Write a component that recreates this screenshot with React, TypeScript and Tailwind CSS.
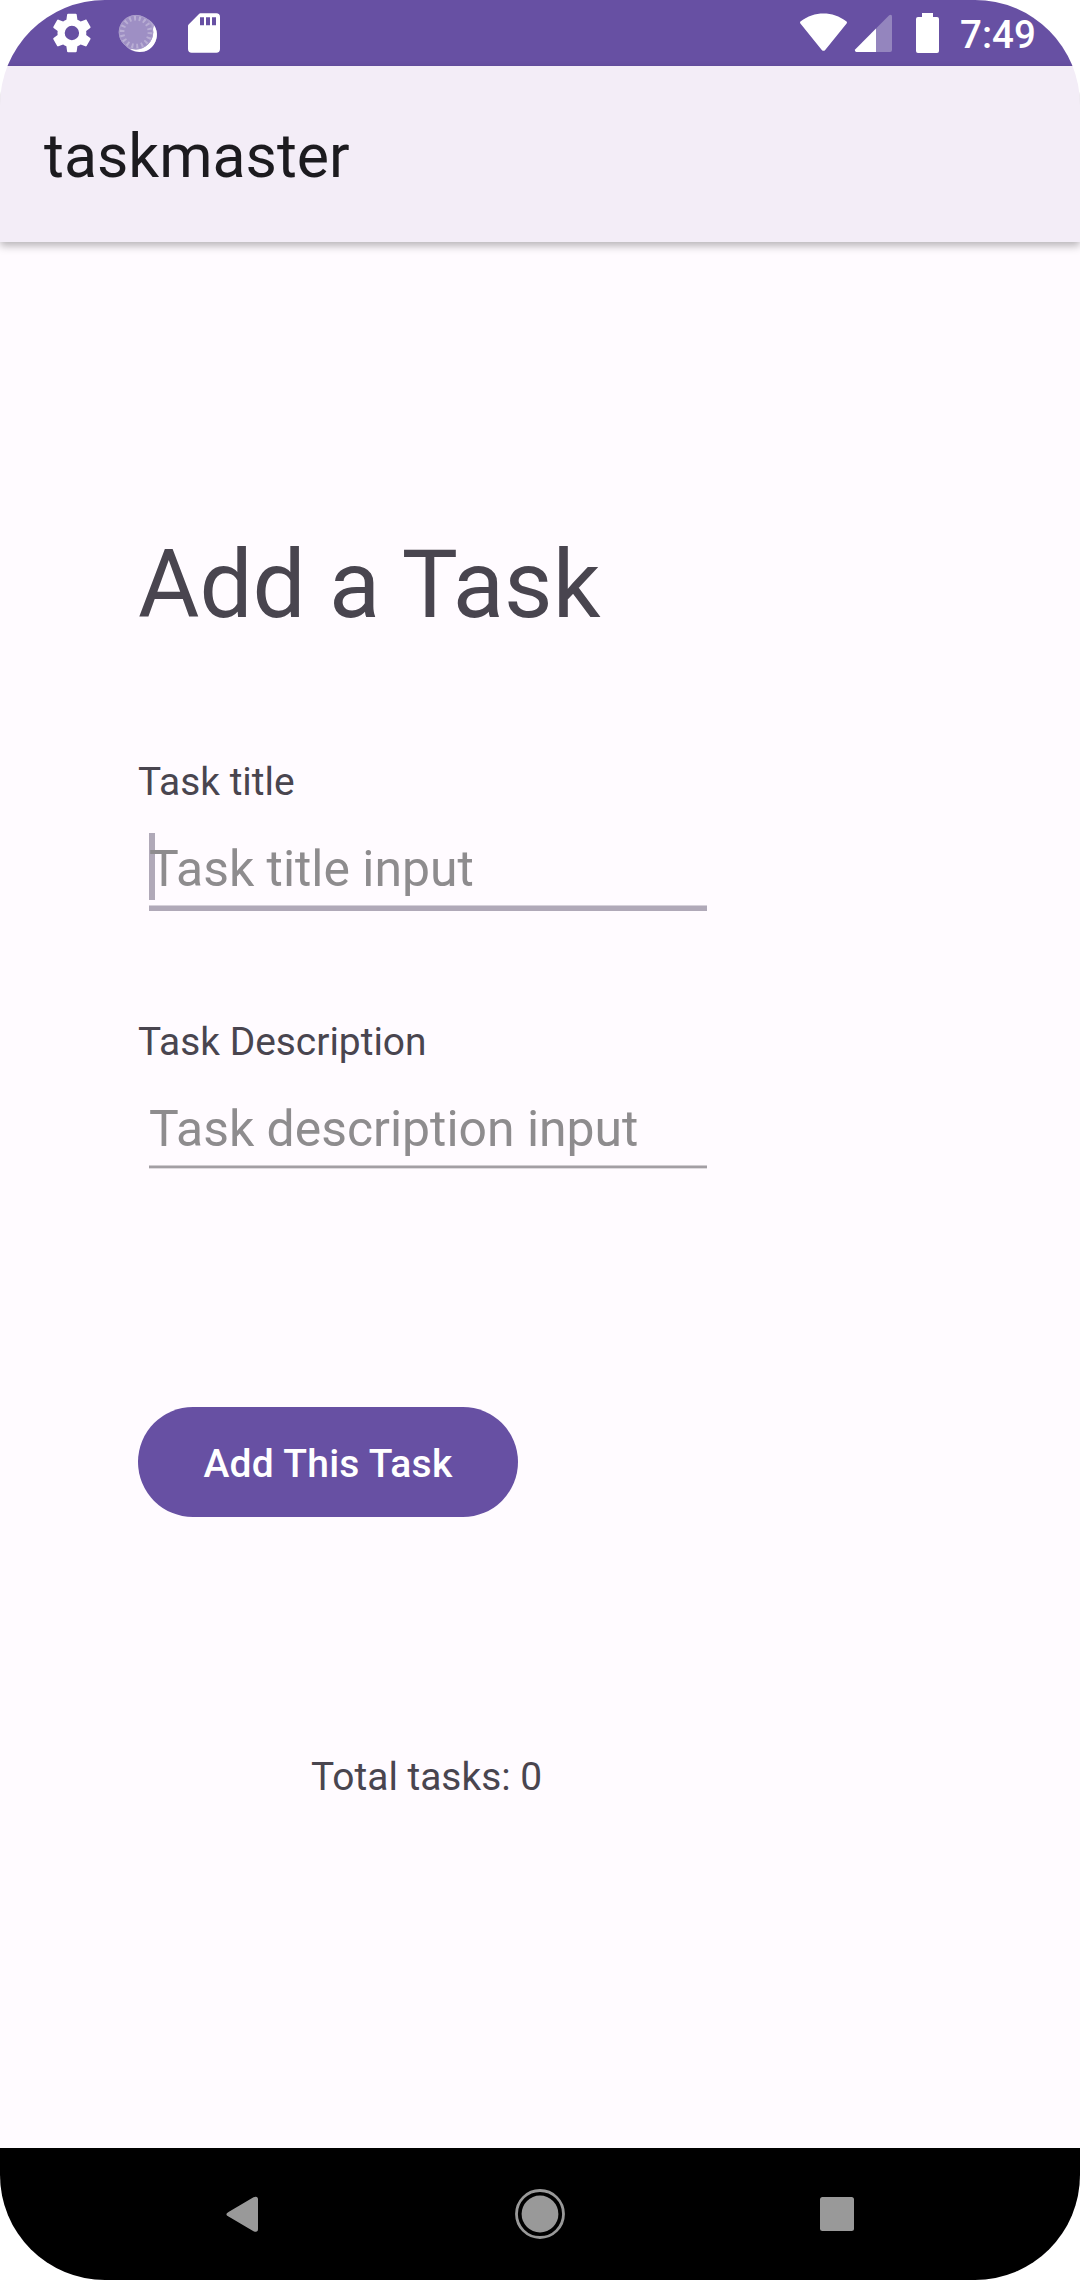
import React from "react";

function StatusBar() {
  return (
    <header className="flex h-[66px] shrink-0 items-start justify-between bg-[#6750a3]">
      <div className="flex h-[66px] items-center pl-[48px]">
        <svg width="48" height="66" viewBox="0 0 48 66" fill="#fff">
          <g transform="translate(-0.1 9) scale(2)">
            <path d="M19.14 12.94c.04-.3.06-.61.06-.94 0-.32-.02-.64-.07-.94l2.03-1.58c.18-.14.23-.41.12-.61l-1.92-3.32c-.12-.22-.37-.29-.59-.22l-2.39.96c-.5-.38-1.03-.7-1.62-.94l-.36-2.54c-.04-.24-.24-.41-.48-.41h-3.84c-.24 0-.43.17-.47.41l-.36 2.54c-.59.24-1.13.57-1.62.94l-2.39-.96c-.22-.08-.47 0-.59.22L2.74 8.87c-.12.21-.08.47.12.61l2.03 1.58c-.05.3-.09.63-.09.94s.02.64.07.94l-2.03 1.58c-.18.14-.23.41-.12.61l1.92 3.32c.12.22.37.29.59.22l2.39-.96c.5.38 1.03.7 1.62.94l.36 2.54c.05.24.24.41.48.41h3.84c.24 0 .44-.17.47-.41l.36-2.54c.59-.24 1.13-.56 1.62-.94l2.39.96c.22.08.47 0 .59-.22l1.92-3.32c.12-.22.07-.47-.12-.61l-2.01-1.58zM12 15.6a3.6 3.6 0 1 1 0-7.2 3.6 3.6 0 0 1 0 7.2z" />
          </g>
        </svg>
        <svg className="ml-[20px]" width="48" height="66" viewBox="0 0 48 66">
          <defs>
            <filter id="soft" x="-10%" y="-10%" width="120%" height="120%">
              <feGaussianBlur stdDeviation="0.6" />
            </filter>
          </defs>
          <circle cx="23.2" cy="34.4" r="17.7" fill="#b3a7d1" filter="url(#soft)" />
          <path d="M38.2 25.5A17.2 17.2 0 0 1 14.5 49.3L20 47L34 38Z" fill="#fff" />
          <circle cx="20" cy="32.2" r="17.2" fill="#9e8fc4" />
          <circle cx="20" cy="32.2" r="14" fill="none" stroke="#b9aed4" strokeWidth="4.8" strokeDasharray="2 2.887" />
          <circle cx="20" cy="32.2" r="16.8" fill="none" stroke="#aa9dcb" strokeWidth="1" />
        </svg>
        <svg className="ml-[20px]" width="48" height="66" viewBox="0 0 48 66">
          <path fillRule="evenodd" fill="#fff" d="M16.3 13.2H32.3Q36 13.2 36 16.9V49Q36 52.7 32.3 52.7H7.7Q4 52.7 4 49V26Q4 25.2 4.6 24.6L15 13.9Q15.6 13.2 16.3 13.2ZM16 17.2V25.2H20V17.2ZM22 17.2V25.2H26V17.2ZM28 17.2V25.2H32V17.2Z" />
        </svg>
      </div>
      <div className="flex h-[66px] items-center pr-[43px]">
        <svg width="48" height="66" viewBox="0 0 48 66">
          <path fill="#fff" d="M0.4 23.4Q-0.5 22.2 0.8 21.2C14 10.8 33 10.8 46.2 21.2Q47.5 22.2 46.6 23.4L25.2 50Q23.5 51.7 21.8 50Z" />
        </svg>
        <svg className="ml-[6px]" width="40" height="66" viewBox="0 0 40 66">
          <path fill="#9485be" d="M22 28.5L35.2 15.3Q38 13.8 38 16.5V50Q38 52 36 52H22Z" />
          <path fill="#fff" d="M22 28.5V52H2.4Q0 51.2 1.4 49.2Z" />
        </svg>
        <svg className="ml-[21px]" width="24" height="66" viewBox="0 0 24 66">
          <path fill="#fff" d="M7 13H18V17H22Q24 17 24 19V51Q24 53 22 53H3Q1 53 1 51V19Q1 17 3 17H7Z" />
        </svg>
        <span className="ml-[21px] w-[77px] whitespace-nowrap pt-[3px] text-[38.5px] font-medium leading-[66px] text-white">7:49</span>
      </div>
    </header>
  );
}

function Field({ label, hint, focused = false }: { label: string; hint: string; focused?: boolean }) {
  return (
    <div className="flex w-[581px] flex-col">
      <label className="text-[38.9px] leading-[52px] text-[#49454f]">{label}</label>
      <div className="relative ml-[11px] mt-[25px] h-[78px] w-[558px]">
        {focused && <span className="absolute left-0 top-0 h-[67px] w-[6px] bg-[#b0a9b8]" />}
        <span className="relative block whitespace-nowrap pt-[7px] text-[49.9px] leading-[58px] text-[#8e8c8e]">{hint}</span>
        {focused ? (
          <span className="absolute left-0 top-[72px] h-[6px] w-[558px] border-t border-[#d5d0d9] bg-[#b0a9b8]" />
        ) : (
          <span className="absolute left-0 top-[72px] h-[4px] w-[558px] border-b border-t border-b-[#dfdbdf] border-t-[#d0ccd0] bg-[#a39fa4]" />
        )}
      </div>
    </div>
  );
}

function NavBar() {
  return (
    <nav className="flex h-[132px] shrink-0 items-center justify-between bg-black px-[209px]">
      <svg width="66" height="66" viewBox="0 0 66 66">
        <path d="M19.5 31L44.5 16.2Q49 14.5 49 18.5V48Q49 52 44.5 50.2L19.5 35.6Q15.2 33.3 19.5 31Z" fill="#999" />
      </svg>
      <svg width="66" height="66" viewBox="0 0 66 66">
        <circle cx="33" cy="33" r="23.5" fill="none" stroke="#999" strokeWidth="2.8" />
        <circle cx="33" cy="33" r="18.4" fill="#999" />
      </svg>
      <svg width="66" height="66" viewBox="0 0 66 66">
        <rect x="15" y="16" width="34" height="34" rx="2.5" fill="#999" />
      </svg>
    </nav>
  );
}

export default function App() {
  return (
    <div className="w-[1080px] bg-white">
      <div className="flex h-[2280px] w-[1080px] flex-col overflow-hidden rounded-[105px] bg-[#fffbff] font-[Roboto,sans-serif]">
        <StatusBar />
        <div className="z-10 flex h-[176px] shrink-0 items-center bg-[#f3edf7] pl-[44px] pt-[5px] shadow-[0_4px_8px_rgba(0,0,0,0.28)]">
          <h1 className="text-[60.8px] leading-[72px] text-[#1c1b1f]">taskmaster</h1>
        </div>
        <main className="flex flex-1 flex-col items-start pl-[138px]">
          <h2 className="mt-[288px] text-[94.2px] leading-[110px] text-[#49454f]">Add a Task</h2>
          <div className="mt-[116px]">
            <Field label="Task title" hint="Task title input" focused />
          </div>
          <div className="mt-[105px]">
            <Field label="Task Description" hint="Task description input" />
          </div>
          <button className="mt-[236px] h-[110px] w-[380px] rounded-full bg-[#6750a3] pt-[4px] text-[39px] font-medium leading-[52px] tracking-[0.28px] text-white">
            Add This Task
          </button>
          <p className="ml-[173px] mt-[234px] text-[38.9px] leading-[52px] text-[#49454f]">Total tasks: 0</p>
        </main>
        <NavBar />
      </div>
    </div>
  );
}
